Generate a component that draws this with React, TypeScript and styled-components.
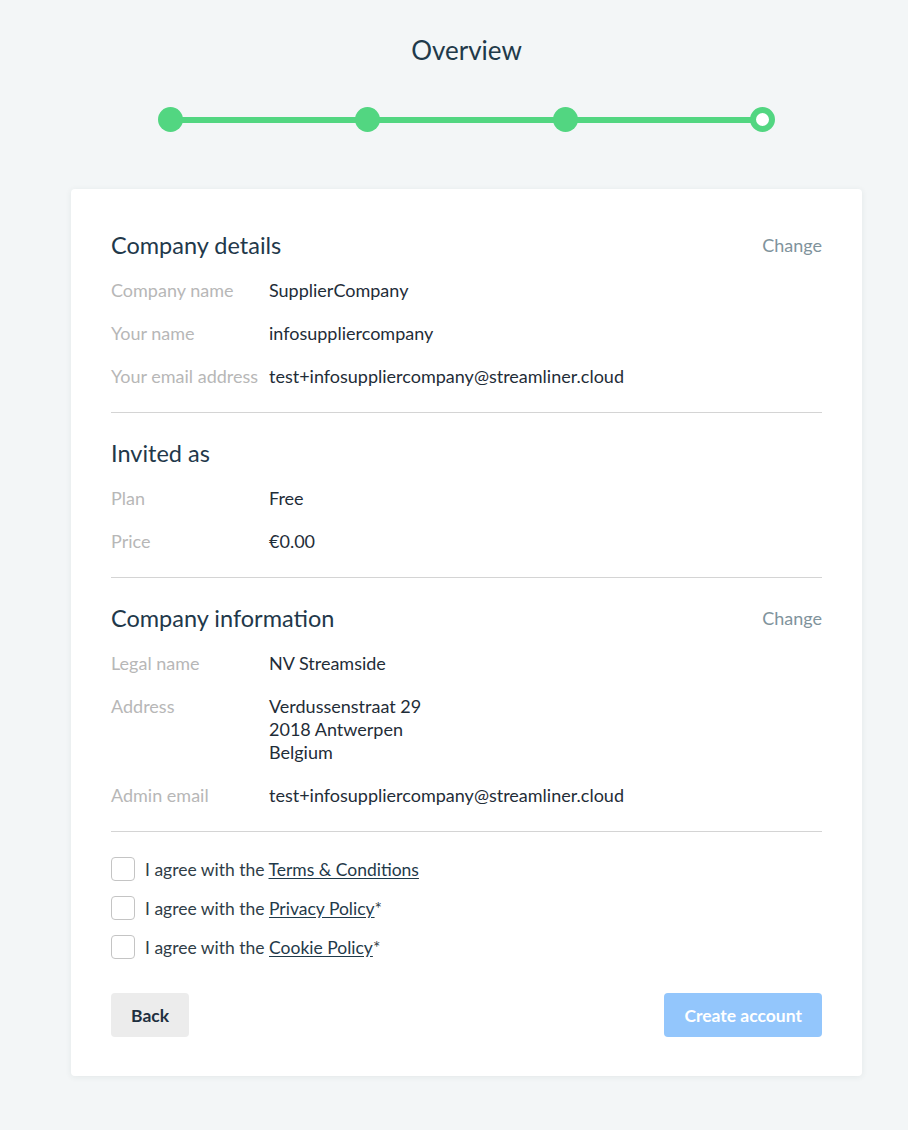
import React from "react";
import styled, { createGlobalStyle } from "styled-components";

const GlobalStyle = createGlobalStyle`
	html, body {
		margin: 0;
		padding: 0;
		background: #f3f6f7;
	}
	body {
		font-family: "Lato", "Noto Sans", sans-serif;
		color: #1f2d38;
	}
`;

const Page = styled.div`
	min-height: 1130px;
	padding: 0 0 0 25px;
	box-sizing: border-box;
	display: flex;
	flex-direction: column;
	align-items: center;
`;

const Title = styled.h1`
	margin: 35px 0 0;
	font-size: 26px;
	line-height: 30px;
	font-weight: 400;
	color: #1f3a4a;
`;

const Stepper = styled.div`
	position: relative;
	width: 618px;
	height: 25px;
	margin-top: 42px;
	display: flex;
	justify-content: space-between;
	align-items: center;
`;

const StepLine = styled.div`
	position: absolute;
	left: 12px;
	right: 12px;
	top: 9.5px;
	height: 6px;
	background: #52d681;
`;

const StepDot = styled.div<{ $current?: boolean }>`
	position: relative;
	width: 25px;
	height: 25px;
	border-radius: 50%;
	box-sizing: border-box;
	background: ${(p) => (p.$current ? "#ffffff" : "#52d681")};
	border: ${(p) => (p.$current ? "6px solid #52d681" : "none")};
`;

const Card = styled.div`
	width: 791px;
	margin-top: 57px;
	box-sizing: border-box;
	background: #ffffff;
	border-radius: 4px;
	box-shadow: 0 1px 6px rgba(40, 60, 70, 0.08);
	padding: 16px 40px 39px;
`;

const Section = styled.section`
	padding: 26px 0 24px;
	border-bottom: 1px solid #d4d4d4;
`;

const SectionHead = styled.div`
	display: flex;
	justify-content: space-between;
	align-items: center;
	height: 28px;
	margin-bottom: 20px;
`;

const Heading = styled.h2`
	margin: 0;
	font-size: 23.5px;
	line-height: 28px;
	font-weight: 400;
	color: #22384a;
`;

const ChangeLink = styled.a`
	font-size: 18px;
	color: #7f939c;
	cursor: pointer;
`;

const Rows = styled.div`
	display: flex;
	flex-direction: column;
	gap: 20px;
`;

const Row = styled.div`
	display: grid;
	grid-template-columns: 158px 1fr;
	font-size: 18px;
	line-height: 23px;
`;

const Label = styled.div`
	color: #b7b7b7;
`;

const Value = styled.div`
	color: #1f2d38;
	white-space: pre-line;
`;

const Agreements = styled.div`
	display: flex;
	flex-direction: column;
	gap: 15px;
	padding-top: 25px;
`;

const CheckRow = styled.label`
	display: flex;
	align-items: center;
	gap: 10px;
	font-size: 17.5px;
	color: #2f3d47;
	cursor: pointer;
`;

const Box = styled.span`
	width: 24px;
	height: 24px;
	box-sizing: border-box;
	border: 1.5px solid #c4c4c4;
	border-radius: 4px;
	background: #ffffff;
`;

const Link = styled.a`
	color: #1f3a4a;
	text-decoration: underline;
	text-underline-offset: 2px;
`;

const Actions = styled.div`
	display: flex;
	justify-content: space-between;
	margin-top: 34px;
`;

const Button = styled.button<{ $primary?: boolean }>`
	height: 44px;
	padding: 0 20px;
	border: none;
	border-radius: 4px;
	font-family: "Lato", "Noto Sans", sans-serif;
	font-size: 17.5px;
	font-weight: 700;
	background: ${(p) => (p.$primary ? "#93c6fc" : "#ececec")};
	color: ${(p) => (p.$primary ? "#ffffff" : "#1f3040")};
	cursor: pointer;
`;

type Item = { label: string; value: string };

const companyDetails: Item[] = [
	{ label: "Company name", value: "SupplierCompany" },
	{ label: "Your name", value: "infosuppliercompany" },
	{ label: "Your email address", value: "test+infosuppliercompany@streamliner.cloud" },
];

const invited: Item[] = [
	{ label: "Plan", value: "Free" },
	{ label: "Price", value: "€0.00" },
];

const companyInfo: Item[] = [
	{ label: "Legal name", value: "NV Streamside" },
	{ label: "Address", value: "Verdussenstraat 29\n2018 Antwerpen\nBelgium" },
	{ label: "Admin email", value: "test+infosuppliercompany@streamliner.cloud" },
];

function InfoSection({ title, items, change }: { title: string; items: Item[]; change?: boolean }) {
	return (
		<Section>
			<SectionHead>
				<Heading>{title}</Heading>
				{change && <ChangeLink>Change</ChangeLink>}
			</SectionHead>
			<Rows>
				{items.map((it) => (
					<Row key={it.label}>
						<Label>{it.label}</Label>
						<Value>{it.value}</Value>
					</Row>
				))}
			</Rows>
		</Section>
	);
}

export default function App() {
	return (
		<>
			<GlobalStyle />
			<Page>
				<Title>Overview</Title>
				<Stepper>
					<StepLine />
					<StepDot />
					<StepDot />
					<StepDot />
					<StepDot $current />
				</Stepper>
				<Card>
					<InfoSection title="Company details" items={companyDetails} change />
					<InfoSection title="Invited as" items={invited} />
					<InfoSection title="Company information" items={companyInfo} change />
					<Agreements>
						<CheckRow>
							<Box />
							<span>
								I agree with the <Link>Terms &amp; Conditions</Link>
							</span>
						</CheckRow>
						<CheckRow>
							<Box />
							<span>
								I agree with the <Link>Privacy Policy</Link>*
							</span>
						</CheckRow>
						<CheckRow>
							<Box />
							<span>
								I agree with the <Link>Cookie Policy</Link>*
							</span>
						</CheckRow>
					</Agreements>
					<Actions>
						<Button>Back</Button>
						<Button $primary>Create account</Button>
					</Actions>
				</Card>
			</Page>
		</>
	);
}
